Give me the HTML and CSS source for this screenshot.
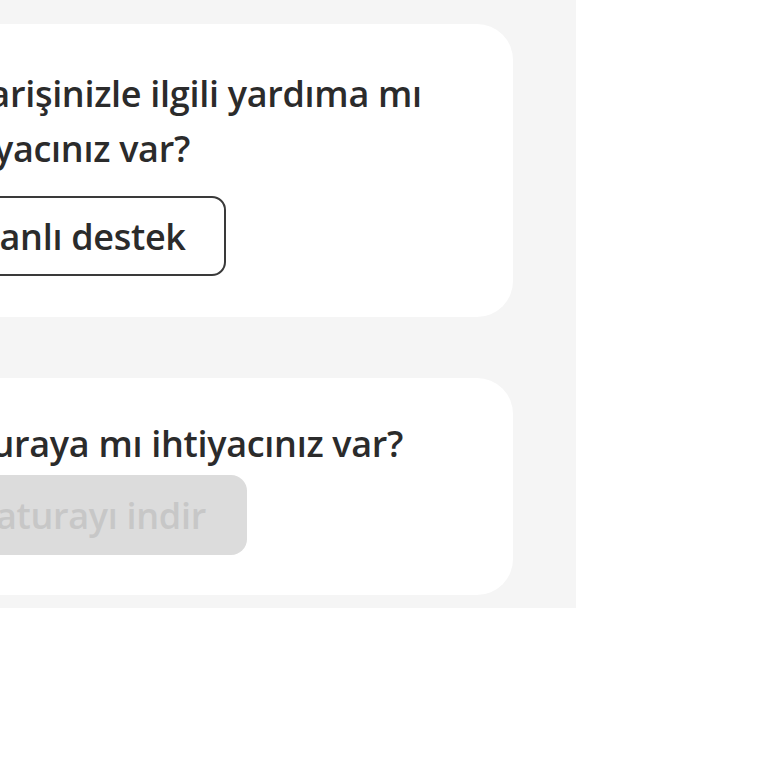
FILE: index.html
```html
<!DOCTYPE html>
<html lang="tr">
<head>
	<meta charset="UTF-8"/>
	<meta name="viewport" content="width=device-width, initial-scale=1.0"/>
	<title>Yardım</title>
	<link rel="stylesheet" href="styles.css">
</head>
<body>
<div class="help-panel">
	<div class="help-list">
		<div class="help-card">
			<p class="help-title">Siparişinizle ilgili yardıma mı ihtiyacınız var?</p>
			<button class="btn btn-outline">Canlı destek</button>
		</div>
		<div class="help-card help-card-invoice">
			<p class="help-title">Faturaya mı ihtiyacınız var?</p>
			<button class="btn btn-disabled" disabled>Faturayı indir</button>
		</div>
	</div>
</div>
</body>
</html>
```

FILE: styles.css
```css
* {
	box-sizing: border-box;
}

body {
	margin: 0;
	background: #fff;
	font-family: "Open Sans", "Noto Sans", sans-serif;
	color: #2b2b2b;
}

.help-panel {
	width: 576px;
	height: 608px;
	background: #f5f5f5;
	overflow: hidden;
	padding-top: 24px;
}

.help-list {
	width: 611px;
	margin-left: -98px;
	display: flex;
	flex-direction: column;
	gap: 61px;
}

.help-card {
	background: #fff;
	border-radius: 36px;
	padding: 42px 40px 41px 36px;
	display: flex;
	flex-direction: column;
	align-items: flex-start;
}

.help-card-invoice {
	padding-top: 38px;
	padding-bottom: 40px;
}

.help-title {
	margin: 0 0 20px;
	font-size: 36px;
	font-weight: 600;
	line-height: 55px;
	letter-spacing: -0.3px;
	width: 540px;
}

.help-card-invoice .help-title {
	margin-bottom: 4px;
}

.btn {
	font-family: inherit;
	font-size: 36px;
	font-weight: 600;
	line-height: 49px;
	letter-spacing: -0.3px;
	height: 80px;
	padding: 0 38px 0 37px;
	border-radius: 14px;
	appearance: none;
	cursor: pointer;
}

.btn-outline {
	background: #fff;
	color: #2b2b2b;
	border: 2px solid #3a3a3a;
}

.btn-disabled {
	background: #dcdcdc;
	color: #c7c7c7;
	border: none;
	border-radius: 16px;
	padding-left: 39px;
	padding-right: 41px;
	cursor: default;
}
```
